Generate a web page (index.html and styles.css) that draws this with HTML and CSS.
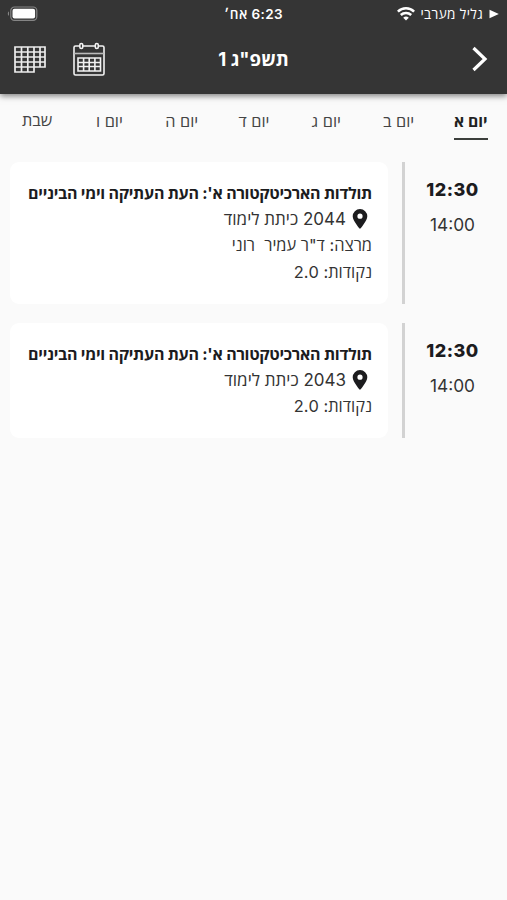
FILE: index.html
```html
<!DOCTYPE html>
<html lang="he" dir="rtl">
<head>
    <meta charset="UTF-8">
    <meta name="viewport" content="width=device-width, initial-scale=1.0">
    <title>מערכת שעות</title>
    <link rel="stylesheet" href="styles.css">
</head>
<body>
    <header class="header">
        <div class="status-bar">
            <div class="carrier">
                <svg class="location" width="10" height="10" viewBox="0 0 10 10"><path d="M0.5 0.8v8.4L9.8 5z" fill="#fff"/></svg>
                <span>גליל מערבי</span>
                <svg class="wifi" width="18" height="14" viewBox="0 0 18 14" fill="none" stroke="#fff" stroke-width="2.5">
                    <path d="M0.9 4.6a11.6 11.6 0 0 1 16.2 0"/>
                    <path d="M3.8 8a7.5 7.5 0 0 1 10.4 0"/>
                    <path d="M9 13.6L6.2 10.8a4 4 0 0 1 5.6 0z" fill="#fff" stroke="none"/>
                </svg>
            </div>
            <div class="clock">6:23 אח׳</div>
            <svg class="battery" width="31" height="16" viewBox="0 0 31 16">
                <rect x="3.8" y="1" width="26" height="13.4" rx="3.6" fill="none" stroke="#858585" stroke-width="1.2"/>
                <rect x="5.5" y="2.8" width="22.6" height="9.8" rx="2" fill="#fff"/>
                <path d="M2 5.5v4.2C0.4 9.2 0.4 6 2 5.5z" fill="#858585"/>
            </svg>
        </div>
        <div class="title-bar">
            <div class="back">
                <svg width="18" height="26" viewBox="0 0 18 26"><path d="M2.5 2L14 13 2.5 24" fill="none" stroke="#fff" stroke-width="3.2"/></svg>
            </div>
            <h1>תשפ"ג 1</h1>
            <div class="actions">
                <svg width="32" height="34" viewBox="0 0 32 34" fill="none" stroke="#f2f2f2" stroke-width="1.6">
                    <rect x="1" y="4" width="30" height="29" rx="1.5"/>
                    <path d="M1 11.5h30" stroke="#bbb"/>
                    <path d="M5 16h22.5v13H5zM5 20.5h22.5M5 24.5h22.5M10.6 16V29M16.2 16V29M21.9 16V29"/>
                    <rect x="6.8" y="1.5" width="3" height="5" rx="1.5" fill="#353535"/>
                    <rect x="22.3" y="1.5" width="3" height="5" rx="1.5" fill="#353535"/>
                </svg>
                <svg width="32" height="27" viewBox="0 0 32 27" fill="none" stroke="#ededed" stroke-width="1.7">
                    <path d="M1 1h30v20H20v5H1zM1 6h30M1 11h30M1 16h30M1 21h19M7.5 1v25M13.8 1v25M20 1v20M26 1v20"/>
                </svg>
            </div>
        </div>
    </header>

    <nav class="days">
        <a class="day active">יום א</a>
        <a class="day">יום ב</a>
        <a class="day">יום ג</a>
        <a class="day">יום ד</a>
        <a class="day">יום ה</a>
        <a class="day">יום ו</a>
        <a class="day saturday">שבת</a>
    </nav>

    <main class="schedule">
        <section class="lesson">
            <div class="hours">
                <div class="start">12:30</div>
                <div class="end">14:00</div>
            </div>
            <div class="card">
                <h2>תולדות הארכיטקטורה א': העת העתיקה וימי הביניים</h2>
                <p class="room">
                    <svg width="16" height="20" viewBox="0 0 16 20"><path fill="#1c1c1e" fill-rule="evenodd" d="M8 0a7.3 7.3 0 0 0-7.3 7.3C0.7 12 8 20 8 20s7.3-8 7.3-12.7A7.3 7.3 0 0 0 8 0zm0 4.6a2.6 2.6 0 1 1 0 5.2 2.6 2.6 0 0 1 0-5.2z"/></svg>
                    <span>2044 כיתת לימוד</span>
                </p>
                <p class="teacher">מרצה: ד"ר עמיר&nbsp; רוני</p>
                <p>נקודות: 2.0</p>
            </div>
        </section>

        <section class="lesson">
            <div class="hours">
                <div class="start">12:30</div>
                <div class="end">14:00</div>
            </div>
            <div class="card">
                <h2>תולדות הארכיטקטורה א': העת העתיקה וימי הביניים</h2>
                <p class="room">
                    <svg width="16" height="20" viewBox="0 0 16 20"><path fill="#1c1c1e" fill-rule="evenodd" d="M8 0a7.3 7.3 0 0 0-7.3 7.3C0.7 12 8 20 8 20s7.3-8 7.3-12.7A7.3 7.3 0 0 0 8 0zm0 4.6a2.6 2.6 0 1 1 0 5.2 2.6 2.6 0 0 1 0-5.2z"/></svg>
                    <span>2043 כיתת לימוד</span>
                </p>
                <p>נקודות: 2.0</p>
            </div>
        </section>
    </main>
</body>
</html>
```
FILE: styles.css
```css
* {
    box-sizing: border-box;
}
body {
    margin: 0;
    min-height: 900px;
    background: #fafafa;
    color: #333;
    font-family: Inter, "Open Sans", "Liberation Sans", sans-serif;
}
svg {
    display: block;
    flex-shrink: 0;
}
.header {
    height: 94px;
    background: #353535;
    color: #fff;
    box-shadow: 0 2px 6px rgba(0, 0, 0, 0.5);
}
.status-bar {
    display: grid;
    grid-template-columns: 1fr auto 1fr;
    align-items: center;
    height: 28px;
    padding: 0 8px 0 7px;
}
.carrier {
    display: flex;
    align-items: center;
    font-size: 13.5px;
    letter-spacing: 0.35px;
}
.carrier span {
    margin: 0 6px;
}
.clock {
    margin-right: -1px;
    font-size: 13.5px;
    font-weight: 600;
    letter-spacing: 0.4px;
}
.battery {
    justify-self: end;
}
.title-bar {
    display: grid;
    grid-template-columns: 1fr auto 1fr;
    align-items: center;
    height: 62px;
    padding: 0 18px 0 14px;
}
.title-bar h1 {
    margin: 0 -4px 0 0;
    font-size: 18.6px;
    font-weight: 700;
    line-height: 24px;
}
.actions {
    display: flex;
    align-items: center;
    justify-content: flex-end;
    gap: 27px;
}
.days {
    display: grid;
    grid-template-columns: repeat(7, 1fr);
    justify-items: center;
    height: 68px;
    padding-top: 15px;
    padding-left: 1px;
}
.day {
    height: 31px;
    font-size: 16.3px;
    line-height: 24px;
    color: #444;
}
.day.active {
    font-size: 15.7px;
    font-weight: 700;
    line-height: 26px;
    color: #222;
    border-bottom: 2px solid #3c3f3c;
}
.day.saturday {
    line-height: 22px;
}
.schedule {
    display: flex;
    flex-direction: column;
    gap: 19px;
}
.lesson {
    display: flex;
    padding-left: 10px;
}
.hours {
    flex-shrink: 0;
    width: 105px;
    padding: 15px 7px 0 0;
    border-left: 3px solid #d2d2d2;
    text-align: center;
}
.start {
    font-size: 18px;
    font-weight: 800;
    line-height: 26px;
    letter-spacing: 0.5px;
    color: #1c1c1e;
}
.end {
    margin-top: 9px;
    font-size: 17.3px;
    line-height: 26px;
}
.card {
    flex: 1;
    min-width: 0;
    margin-right: 14px;
    padding: 18px 16px;
    border-radius: 9px;
    background: #fff;
}
.card h2 {
    margin: 0;
    font-size: 16px;
    font-weight: 700;
    line-height: 26px;
    letter-spacing: -0.26px;
    color: #1c1c1e;
    white-space: nowrap;
}
.card p {
    margin: 0;
    font-size: 16.4px;
    line-height: 27px;
}
.card .room {
    display: flex;
    align-items: center;
    gap: 6px;
    height: 26px;
    padding-right: 4px;
    font-size: 17px;
}
```
